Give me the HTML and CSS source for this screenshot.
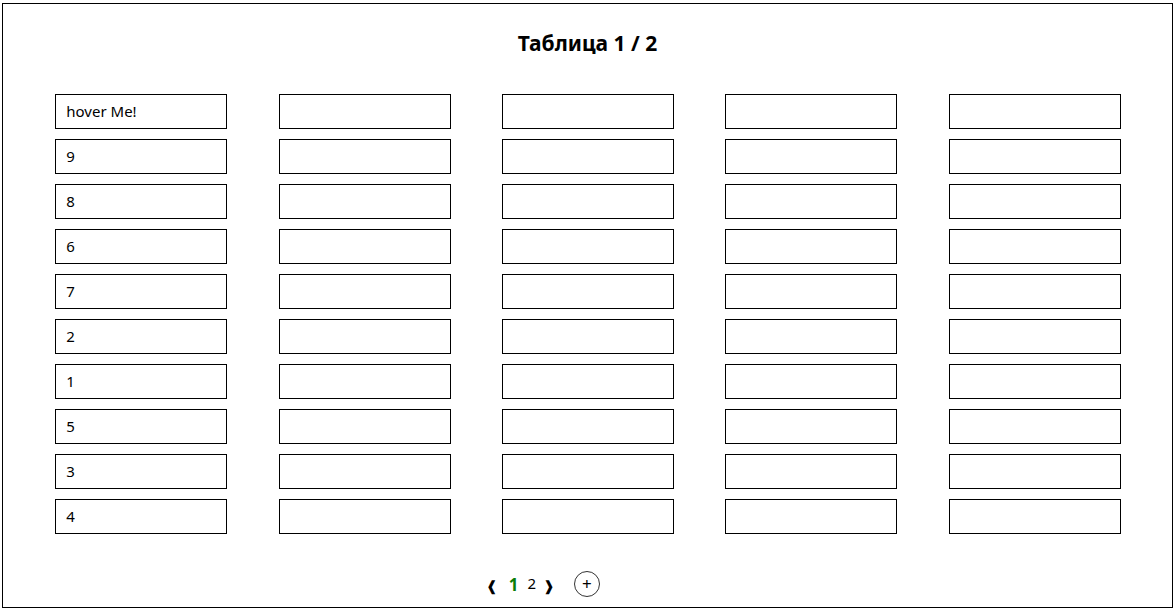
FILE: index.html
```html
<!DOCTYPE html>
<html lang="ru">
<head>
<meta charset="utf-8">
<title>Таблица</title>
<link rel="stylesheet" href="styles.css">
</head>
<body>
<div class="frame">
  <h1 class="title">Таблица 1 / 2</h1>
  <div class="grid">
    <input class="cell" value="hover Me!"><input class="cell"><input class="cell"><input class="cell"><input class="cell">
    <input class="cell" value="9"><input class="cell"><input class="cell"><input class="cell"><input class="cell">
    <input class="cell" value="8"><input class="cell"><input class="cell"><input class="cell"><input class="cell">
    <input class="cell" value="6"><input class="cell"><input class="cell"><input class="cell"><input class="cell">
    <input class="cell" value="7"><input class="cell"><input class="cell"><input class="cell"><input class="cell">
    <input class="cell" value="2"><input class="cell"><input class="cell"><input class="cell"><input class="cell">
    <input class="cell" value="1"><input class="cell"><input class="cell"><input class="cell"><input class="cell">
    <input class="cell" value="5"><input class="cell"><input class="cell"><input class="cell"><input class="cell">
    <input class="cell" value="3"><input class="cell"><input class="cell"><input class="cell"><input class="cell">
    <input class="cell" value="4"><input class="cell"><input class="cell"><input class="cell"><input class="cell">
  </div>
  <div class="pager">
    <span class="arrow">&#x2770;</span>
    <span class="page current">1</span>
    <span class="page">2</span>
    <span class="arrow">&#x2771;</span>
    <button class="add">+</button>
  </div>
</div>
</body>
</html>
```
FILE: styles.css
```css
html, body {
  margin: 0;
  padding: 0;
  background: #fff;
}
body {
  padding: 3px 0 0 2px;
  font-family: "Noto Sans", "Open Sans", sans-serif;
  color: #000;
}
.frame {
  box-sizing: border-box;
  width: 1171px;
  height: 605px;
  border: 1px solid #000;
  display: flex;
  flex-direction: column;
}
.title {
  margin: 26px 0 0;
  font-size: 21px;
  line-height: 26px;
  font-weight: 700;
  text-align: center;
}
.grid {
  margin-top: 38px;
  display: grid;
  grid-template-columns: repeat(5, 172px);
  justify-content: space-evenly;
  row-gap: 10px;
  padding-left: 1px;
}
.cell {
  box-sizing: border-box;
  width: 172px;
  height: 35px;
  margin: 0;
  border: 1px solid #000;
  border-radius: 0;
  padding: 0 0 1px 10px;
  font-family: "Noto Sans", "Open Sans", sans-serif;
  font-size: 15px;
  color: #000;
  background: #fff;
  outline: none;
}
.pager {
  margin-top: 37px;
  display: flex;
  align-items: center;
  padding-left: 483px;
  height: 26px;
}
.arrow {
  font-family: "DejaVu Sans", sans-serif;
  font-weight: 700;
  font-size: 14px;
  line-height: 14px;
  margin-top: 3px;
}
.page {
  font-size: 16px;
  line-height: 20px;
  margin-left: 11px;
}
.page.current {
  color: #0a7d0a;
  font-weight: 700;
  font-size: 17px;
  margin-top: 2px;
}
.page + .page {
  margin-left: 9px;
  margin-top: -3px;
  font-size: 15px;
}
.page + .arrow {
  margin-left: 7px;
}
.add {
  box-sizing: border-box;
  width: 26px;
  height: 26px;
  margin: 0 0 0 19px;
  padding: 0;
  border: 1px solid #333;
  border-radius: 50%;
  background: #fff;
  font-family: "Noto Sans", sans-serif;
  font-size: 17px;
  line-height: 22px;
  color: #000;
}
```
